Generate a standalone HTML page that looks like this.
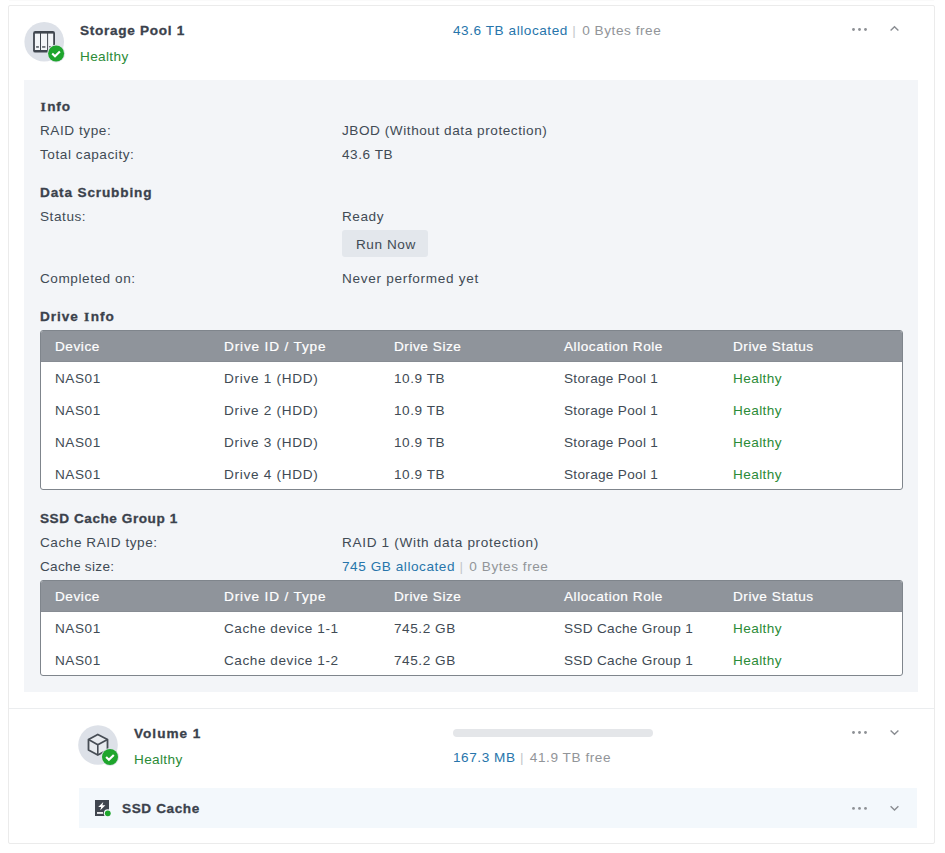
<!DOCTYPE html>
<html><head><meta charset="utf-8">
<style>
*{margin:0;padding:0;box-sizing:border-box}
html,body{width:945px;height:853px;background:#fff;overflow:hidden}
body{position:relative;font-family:"Liberation Sans",sans-serif;font-size:13.6px;color:#414b55;letter-spacing:0.55px}
.a{position:absolute;white-space:nowrap;line-height:16px;margin-top:1px}
.b{font-weight:bold;letter-spacing:0.7px;-webkit-text-stroke:0.3px #3b424c;color:#3b424c}
.g{color:#2b8b37}
.bl{color:#2775ab}
.gr{color:#929599;margin-left:1.5px}
.sep{color:#c4c7cb}
.card{position:absolute;left:8px;top:5px;width:927px;height:839px;border:1px solid #ebebeb;border-radius:2px}
.panel{position:absolute;left:24px;top:80px;width:894px;height:612px;background:#f3f5f8}
.circle{position:absolute;width:40px;height:40px;border-radius:50%;background:#dde1e8}
.tbl{position:absolute;left:40px;width:863px;border:1px solid #7f858c;border-radius:3px;background:#fff;overflow:hidden}
.th{height:31px;background:#8f949b;position:relative;border-bottom:1px solid #878c93}
.th span{position:absolute;top:8px;color:#fff;-webkit-text-stroke:0.2px #fff}
.tr{height:32px;position:relative}
.tr span{position:absolute;top:9px}
.btn{position:absolute;left:342px;top:230px;width:86px;height:27px;background:#e3e7ec;border-radius:3px}
.dots{position:absolute;width:16px;height:4px}
.dots i{position:absolute;top:0;width:3px;height:3px;border-radius:50%;background:#8d9298}
</style></head><body>
<div class="card"></div>
<div style="position:absolute;left:9px;top:0;width:925px;height:1px;background:#fafafa"></div>
<!-- header -->

<!-- storage pool icon -->
<svg style="position:absolute;left:24px;top:22px" width="42" height="42" viewBox="0 0 42 42">
 <circle cx="20.2" cy="19.8" r="19.8" fill="#dde1e8"/>
 <rect x="9.1" y="9.1" width="21.9" height="21.5" rx="2.2" fill="#40464f"/>
 <rect x="10.9" y="11.6" width="5.1" height="16.4" fill="#f3f5f8"/>
 <rect x="17" y="11.6" width="6.1" height="16.4" fill="#f3f5f8"/>
 <rect x="24.1" y="11.6" width="5.1" height="16.4" fill="#f3f5f8"/>
 <rect x="12.1" y="24.2" width="2.8" height="1.5" fill="#50565e"/>
 <rect x="18.1" y="24.2" width="3.3" height="1.5" fill="#50565e"/>
 <rect x="25" y="24.2" width="2.2" height="1.5" fill="#50565e"/>
 <circle cx="32.1" cy="31.5" r="9" fill="#dde1e8"/>
 <circle cx="32.1" cy="31.5" r="8" fill="#1ea52c"/>
 <path d="M28.2 31.6 L31 34.3 L35.9 29.4" fill="none" stroke="#fff" stroke-width="2.1"/>
</svg>
<!-- dots / chevrons -->
<svg style="position:absolute;left:848px;top:20px" width="56" height="16" viewBox="0 0 56 16">
 <circle cx="5.5" cy="9.5" r="1.4" fill="#8d9095"/><circle cx="11.5" cy="9.5" r="1.4" fill="#8d9095"/><circle cx="17.5" cy="9.5" r="1.4" fill="#8d9095"/>
 <path d="M42.6 10.6 L46.5 6.8 L50.4 10.6" fill="none" stroke="#8a8d92" stroke-width="1.4"/>
</svg>

<div class="a b" style="left:80px;top:22px">Storage Pool 1</div>
<div class="a g" style="left:80px;top:48px;letter-spacing:0.35px">Healthy</div>
<div class="a" style="left:453px;top:22px"><span class="bl">43.6 TB allocated</span> <span class="sep">|</span> <span class="gr">0 Bytes free</span></div>

<div class="panel"></div>
<div class="a b" style="left:40px;top:98px;letter-spacing:0.9px"><span style="font-family:'Liberation Serif',serif;font-size:13.5px;margin:0 0.5px 0 0.5px">I</span>nfo</div>
<div class="a" style="left:40px;top:122px">RAID type:</div>
<div class="a" style="left:342px;top:122px">JBOD (Without data protection)</div>
<div class="a" style="left:40px;top:146px">Total capacity:</div>
<div class="a" style="left:342px;top:146px">43.6 TB</div>
<div class="a b" style="left:40px;top:184px;letter-spacing:0.85px">Data Scrubbing</div>
<div class="a" style="left:40px;top:208px">Status:</div>
<div class="a" style="left:342px;top:208px">Ready</div>
<div class="btn"></div>
<div class="a" style="left:356px;top:236px">Run Now</div>
<div class="a" style="left:40px;top:270px">Completed on:</div>
<div class="a" style="left:342px;top:270px;letter-spacing:0.69px">Never performed yet</div>
<div class="a b" style="left:40px;top:308px;letter-spacing:0.95px">Drive <span style="font-family:'Liberation Serif',serif;font-size:13.5px;margin:0 0.5px 0 0.5px">I</span>nfo</div>

<div class="tbl" style="top:330px;height:160px">
 <div class="th"><span style="left:14px">Device</span><span style="left:183px;letter-spacing:0.85px">Drive ID / Type</span><span style="left:353px">Drive Size</span><span style="left:523px">Allocation Role</span><span style="left:692px">Drive Status</span></div>
 <div class="tr"><span style="left:14px">NAS01</span><span style="left:183px;letter-spacing:0.7px">Drive 1 (HDD)</span><span style="left:353px">10.9 TB</span><span style="left:523px;letter-spacing:0.3px">Storage Pool 1</span><span class="g" style="left:692px;letter-spacing:0.4px">Healthy</span></div>
 <div class="tr"><span style="left:14px">NAS01</span><span style="left:183px;letter-spacing:0.7px">Drive 2 (HDD)</span><span style="left:353px">10.9 TB</span><span style="left:523px;letter-spacing:0.3px">Storage Pool 1</span><span class="g" style="left:692px;letter-spacing:0.4px">Healthy</span></div>
 <div class="tr"><span style="left:14px">NAS01</span><span style="left:183px;letter-spacing:0.7px">Drive 3 (HDD)</span><span style="left:353px">10.9 TB</span><span style="left:523px;letter-spacing:0.3px">Storage Pool 1</span><span class="g" style="left:692px;letter-spacing:0.4px">Healthy</span></div>
 <div class="tr"><span style="left:14px">NAS01</span><span style="left:183px;letter-spacing:0.7px">Drive 4 (HDD)</span><span style="left:353px">10.9 TB</span><span style="left:523px;letter-spacing:0.3px">Storage Pool 1</span><span class="g" style="left:692px;letter-spacing:0.4px">Healthy</span></div>
</div>

<div class="a b" style="left:40px;top:510px;letter-spacing:0.55px">SSD Cache Group 1</div>
<div class="a" style="left:40px;top:534px">Cache RAID type:</div>
<div class="a" style="left:342px;top:534px;letter-spacing:0.67px">RAID 1 (With data protection)</div>
<div class="a" style="left:40px;top:558px;letter-spacing:0.3px">Cache size:</div>
<div class="a" style="left:342px;top:558px"><span class="bl">745 GB allocated</span> <span class="sep">|</span> <span class="gr">0 Bytes free</span></div>

<div class="tbl" style="top:580px;height:96px">
 <div class="th"><span style="left:14px">Device</span><span style="left:183px;letter-spacing:0.85px">Drive ID / Type</span><span style="left:353px">Drive Size</span><span style="left:523px">Allocation Role</span><span style="left:692px">Drive Status</span></div>
 <div class="tr"><span style="left:14px">NAS01</span><span style="left:183px">Cache device 1-1</span><span style="left:353px">745.2 GB</span><span style="left:523px;letter-spacing:0.3px">SSD Cache Group 1</span><span class="g" style="left:692px;letter-spacing:0.4px">Healthy</span></div>
 <div class="tr"><span style="left:14px">NAS01</span><span style="left:183px">Cache device 1-2</span><span style="left:353px">745.2 GB</span><span style="left:523px;letter-spacing:0.3px">SSD Cache Group 1</span><span class="g" style="left:692px;letter-spacing:0.4px">Healthy</span></div>
</div>

<div style="position:absolute;left:9px;top:708px;width:925px;height:1px;background:#ebedef"></div>

<svg style="position:absolute;left:78px;top:725px" width="42" height="42" viewBox="0 0 42 42">
 <circle cx="20" cy="20" r="19.8" fill="#dde1e8"/>
 <path d="M19.8 9.5 L10.5 14.5 L10.5 25 L19.8 30 L29.5 25 L29.5 14.5 Z" fill="#e8ebef" stroke="#474d55" stroke-width="1.8" stroke-linejoin="round"/>
 <path d="M10.5 14.5 L19.8 19.8 L29.5 14.5 M19.8 19.8 L19.8 30" fill="none" stroke="#474d55" stroke-width="1.6"/>
 <circle cx="32" cy="32" r="9" fill="#dde1e8"/>
 <circle cx="32" cy="32" r="8" fill="#1ea52c"/>
 <path d="M28.1 32.1 L30.9 34.8 L35.8 29.9" fill="none" stroke="#fff" stroke-width="2.1"/>
</svg>
<svg style="position:absolute;left:848px;top:723px" width="56" height="16" viewBox="0 0 56 16">
 <circle cx="5.5" cy="9.5" r="1.4" fill="#8d9095"/><circle cx="11.5" cy="9.5" r="1.4" fill="#8d9095"/><circle cx="17.5" cy="9.5" r="1.4" fill="#8d9095"/>
 <path d="M42.6 7.4 L46.5 11.2 L50.4 7.4" fill="none" stroke="#8a8d92" stroke-width="1.4"/>
</svg>

<div class="a b" style="left:134px;top:725px;letter-spacing:1.0px">Volume 1</div>
<div class="a g" style="left:134px;top:751px;letter-spacing:0.35px">Healthy</div>
<div style="position:absolute;left:453px;top:729px;width:200px;height:8px;border-radius:4px;background:#e4e6e9"></div>
<div class="a" style="left:453px;top:749px"><span class="bl">167.3 MB</span> <span class="sep">|</span> <span class="gr">41.9 TB free</span></div>

<div style="position:absolute;left:79px;top:788px;width:838px;height:40px;background:#f3f8fc"></div>
<div class="a b" style="left:122px;top:800px;letter-spacing:0.6px">SSD Cache</div>

<svg style="position:absolute;left:94px;top:799px" width="20" height="20" viewBox="0 0 20 20">
 <rect x="1" y="1" width="14" height="16" fill="#40464f"/>
 <path d="M9.3 2.9 L4.2 7.9 L7.1 7.9 L6.3 11.2 L11.4 6.2 L8.4 6.2 Z" fill="#fff"/>
 <rect x="3" y="13.1" width="6" height="1.7" fill="#fff"/>
 <circle cx="13.8" cy="14.3" r="4" fill="#f3f8fc"/>
 <circle cx="13.8" cy="14.3" r="2.9" fill="#1ea52c"/>
</svg>
<svg style="position:absolute;left:848px;top:799px" width="56" height="16" viewBox="0 0 56 16">
 <circle cx="5.5" cy="9.4" r="1.4" fill="#8d9095"/><circle cx="11.5" cy="9.4" r="1.4" fill="#8d9095"/><circle cx="17.5" cy="9.4" r="1.4" fill="#8d9095"/>
 <path d="M42.6 7.2 L46.5 11 L50.4 7.2" fill="none" stroke="#8a8d92" stroke-width="1.4"/>
</svg>
</body></html>
